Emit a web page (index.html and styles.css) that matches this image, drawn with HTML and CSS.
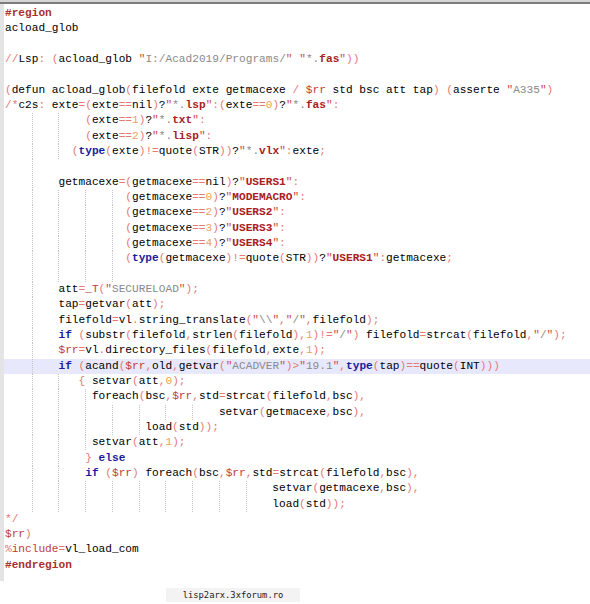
FILE: index.html
```html
<!DOCTYPE html>
<html>
<head>
<meta charset="utf-8">
<link rel="stylesheet" href="styles.css">
</head>
<body>
<div class="topstrip"></div>
<div class="editor">
  <div class="gutter"></div>
  <div class="code">
<div class="ln"><span class="p">#region</span></div>
<div class="ln">acload_glob</div>
<div class="ln"></div>
<div class="ln"><span class="o">//</span>Lsp<span class="o">:</span> <span class="o">(</span>acload_glob <span class="q">"</span><span class="s">I:/Acad2019/Programs/</span><span class="q">"</span> <span class="q">"</span><span class="s">*.</span><span class="w">fas</span><span class="q">"</span><span class="o">))</span></div>
<div class="ln"></div>
<div class="ln"><span class="o">(</span>defun acload_glob<span class="o">(</span>filefold exte getmacexe <span class="o">/</span> <span class="v">$rr</span> std bsc att tap<span class="o">)</span> <span class="o">(</span>asserte <span class="q">"</span><span class="s">A335</span><span class="q">"</span><span class="o">)</span></div>
<div class="ln"><span class="o">/*</span>c2s<span class="o">:</span> exte<span class="o">=(</span>exte<span class="o">==</span>nil<span class="o">)</span>?<span class="q">"</span><span class="s">*.</span><span class="w">lsp</span><span class="q">"</span><span class="o">:(</span>exte<span class="o">==</span><span class="n">0</span><span class="o">)</span>?<span class="q">"</span><span class="s">*.</span><span class="w">fas</span><span class="q">"</span><span class="o">:</span></div>
<div class="ln"><span class="i0"></span><span class="i"></span><span class="i"></span><span class="o">(</span>exte<span class="o">==</span><span class="n">1</span><span class="o">)</span>?<span class="q">"</span><span class="s">*.</span><span class="w">txt</span><span class="q">"</span><span class="o">:</span></div>
<div class="ln"><span class="i0"></span><span class="i"></span><span class="i"></span><span class="o">(</span>exte<span class="o">==</span><span class="n">2</span><span class="o">)</span>?<span class="q">"</span><span class="s">*.</span><span class="w">lisp</span><span class="q">"</span><span class="o">:</span></div>
<div class="ln"><span class="i0"></span><span class="i"></span><span class="i2"></span><span class="o">(</span><span class="k">type</span><span class="o">(</span>exte<span class="o">)!=</span>quote<span class="o">(</span>STR<span class="o">))</span>?<span class="q">"</span><span class="s">*.</span><span class="w">vlx</span><span class="q">"</span><span class="o">:</span>exte<span class="o">;</span></div>
<div class="ln"><span class="i0"></span><span class="i"></span></div>
<div class="ln"><span class="i0"></span><span class="i"></span>getmacexe<span class="o">=(</span>getmacexe<span class="o">==</span>nil<span class="o">)</span>?<span class="q">"</span><span class="w">USERS1</span><span class="q">"</span><span class="o">:</span></div>
<div class="ln"><span class="i0"></span><span class="i"></span><span class="i"></span><span class="i"></span><span class="i2"></span><span class="o">(</span>getmacexe<span class="o">==</span><span class="n">0</span><span class="o">)</span>?<span class="q">"</span><span class="w">MODEMACRO</span><span class="q">"</span><span class="o">:</span></div>
<div class="ln"><span class="i0"></span><span class="i"></span><span class="i"></span><span class="i"></span><span class="i2"></span><span class="o">(</span>getmacexe<span class="o">==</span><span class="n">2</span><span class="o">)</span>?<span class="q">"</span><span class="w">USERS2</span><span class="q">"</span><span class="o">:</span></div>
<div class="ln"><span class="i0"></span><span class="i"></span><span class="i"></span><span class="i"></span><span class="i2"></span><span class="o">(</span>getmacexe<span class="o">==</span><span class="n">3</span><span class="o">)</span>?<span class="q">"</span><span class="w">USERS3</span><span class="q">"</span><span class="o">:</span></div>
<div class="ln"><span class="i0"></span><span class="i"></span><span class="i"></span><span class="i"></span><span class="i2"></span><span class="o">(</span>getmacexe<span class="o">==</span><span class="n">4</span><span class="o">)</span>?<span class="q">"</span><span class="w">USERS4</span><span class="q">"</span><span class="o">:</span></div>
<div class="ln"><span class="i0"></span><span class="i"></span><span class="i"></span><span class="i"></span><span class="i2"></span><span class="o">(</span><span class="k">type</span><span class="o">(</span>getmacexe<span class="o">)!=</span>quote<span class="o">(</span>STR<span class="o">))</span>?<span class="q">"</span><span class="w">USERS1</span><span class="q">"</span><span class="o">:</span>getmacexe<span class="o">;</span></div>
<div class="ln"><span class="i0"></span><span class="i"></span><span class="i"></span><span class="i"></span><span class="i"></span></div>
<div class="ln"><span class="i0"></span><span class="i"></span>att<span class="o">=</span><span class="v">_T</span><span class="o">(</span><span class="q">"</span><span class="s">SECURELOAD</span><span class="q">"</span><span class="o">);</span></div>
<div class="ln"><span class="i0"></span><span class="i"></span>tap<span class="o">=</span>getvar<span class="o">(</span>att<span class="o">);</span></div>
<div class="ln"><span class="i0"></span><span class="i"></span>filefold<span class="o">=</span>vl<span class="o">.</span>string_translate<span class="o">(</span><span class="q">"</span><span class="s">\\</span><span class="q">"</span><span class="o">,</span><span class="q">"</span><span class="s">/</span><span class="q">"</span><span class="o">,</span>filefold<span class="o">);</span></div>
<div class="ln"><span class="i0"></span><span class="i"></span><span class="k">if</span> <span class="o">(</span>substr<span class="o">(</span>filefold<span class="o">,</span>strlen<span class="o">(</span>filefold<span class="o">),</span><span class="n">1</span><span class="o">)!=</span><span class="q">"</span><span class="s">/</span><span class="q">"</span><span class="o">)</span> filefold<span class="o">=</span>strcat<span class="o">(</span>filefold<span class="o">,</span><span class="q">"</span><span class="s">/</span><span class="q">"</span><span class="o">);</span></div>
<div class="ln"><span class="i0"></span><span class="i"></span><span class="v">$rr</span><span class="o">=</span>vl<span class="o">.</span>directory_files<span class="o">(</span>filefold<span class="o">,</span>exte<span class="o">,</span><span class="n">1</span><span class="o">);</span></div>
<div class="ln hl"><span class="i0"></span><span class="i"></span><span class="k">if</span> <span class="o">(</span>acand<span class="o">(</span><span class="v">$rr</span><span class="o">,</span>old<span class="o">,</span>getvar<span class="o">(</span><span class="q">"</span><span class="s">ACADVER</span><span class="q">"</span><span class="o">)&gt;</span><span class="q">"</span><span class="s">19.1</span><span class="q">"</span><span class="o">,</span><span class="k">type</span><span class="o">(</span>tap<span class="o">)==</span>quote<span class="o">(</span>INT<span class="o">)))</span></div>
<div class="ln"><span class="i0"></span><span class="i"></span><span class="i3"></span><span class="o">{</span> setvar<span class="o">(</span>att<span class="o">,</span><span class="n">0</span><span class="o">);</span></div>
<div class="ln"><span class="i0"></span><span class="i"></span><span class="i"></span><span class="i1"></span>foreach<span class="o">(</span>bsc<span class="o">,</span><span class="v">$rr</span><span class="o">,</span>std<span class="o">=</span>strcat<span class="o">(</span>filefold<span class="o">,</span>bsc<span class="o">),</span></div>
<div class="ln"><span class="i0"></span><span class="i"></span><span class="i"></span><span class="i"></span><span class="i"></span><span class="i"></span><span class="i"></span><span class="i"></span>setvar<span class="o">(</span>getmacexe<span class="o">,</span>bsc<span class="o">),</span></div>
<div class="ln"><span class="i0"></span><span class="i"></span><span class="i"></span><span class="i"></span><span class="i"></span><span class="i1"></span>load<span class="o">(</span>std<span class="o">));</span></div>
<div class="ln"><span class="i0"></span><span class="i"></span><span class="i"></span><span class="i1"></span>setvar<span class="o">(</span>att<span class="o">,</span><span class="n">1</span><span class="o">);</span></div>
<div class="ln"><span class="i0"></span><span class="i"></span><span class="i"></span><span class="o">}</span> <span class="k">else</span></div>
<div class="ln"><span class="i0"></span><span class="i"></span><span class="i"></span><span class="k">if</span> <span class="o">(</span><span class="v">$rr</span><span class="o">)</span> foreach<span class="o">(</span>bsc<span class="o">,</span><span class="v">$rr</span><span class="o">,</span>std<span class="o">=</span>strcat<span class="o">(</span>filefold<span class="o">,</span>bsc<span class="o">),</span></div>
<div class="ln"><span class="i0"></span><span class="i"></span><span class="i"></span><span class="i"></span><span class="i"></span><span class="i"></span><span class="i"></span><span class="i"></span><span class="i"></span><span class="i"></span>setvar<span class="o">(</span>getmacexe<span class="o">,</span>bsc<span class="o">),</span></div>
<div class="ln"><span class="i0"></span><span class="i"></span><span class="i"></span><span class="i"></span><span class="i"></span><span class="i"></span><span class="i"></span><span class="i"></span><span class="i"></span><span class="i"></span>load<span class="o">(</span>std<span class="o">));</span></div>
<div class="ln"><span class="o">*/</span></div>
<div class="ln"><span class="v">$rr</span><span class="o">)</span></div>
<div class="ln"><span class="o">%</span><span class="v">include</span><span class="o">=</span>vl_load_com</div>
<div class="ln"><span class="p">#endregion</span></div>
  </div>
</div>
<div class="footer"><span class="mark">lisp2arx.3xforum.ro</span></div>
</body>
</html>
```

FILE: styles.css
```css
html, body {
  margin: 0;
  padding: 0;
  background: #ffffff;
}
.topstrip {
  height: 2px;
  background: #d6d6d6;
}
.editor {
  display: flex;
  border-top: 2px solid #7c7c7c;
  height: 579px;
  box-sizing: border-box;
}
.gutter {
  width: 4px;
  background: #e4e4e4;
  flex: none;
}
.code {
  flex: 1;
  padding-top: 2px;
  font-family: "Liberation Mono", "Courier New", monospace;
  font-size: 11.15px;
  color: #000000;
}
.ln {
  height: 15.33px;
  line-height: 15.33px;
  white-space: pre;
  padding-left: 1px;
}
.hl {
  background: #e8e8fc;
}
.i0, .i, .i1, .i2, .i3 {
  display: inline-block;
  height: 15.33px;
  vertical-align: top;
}
.i0, .i { width: 4ch; }
.i1 { width: 1ch; }
.i2 { width: 2ch; }
.i3 { width: 3ch; }
.i, .i1, .i2, .i3 {
  background-image: repeating-linear-gradient(to bottom, #c4c4c4 0 1px, transparent 1px 2px);
  background-size: 1px 100%;
  background-repeat: no-repeat;
  background-position: 0 0;
}
.o { color: #e67878; }
.q { color: #d04848; }
.s { color: #8a8a8a; }
.w { color: #a82020; font-weight: bold; }
.k { color: #1c1c9a; font-weight: bold; }
.n { color: #eda15a; }
.v { color: #c03a3a; }
.p { color: #a83030; font-weight: bold; }
.footer {
  height: 21px;
  display: flex;
  align-items: flex-end;
}
.mark {
  margin-left: 166px;
  width: 134px;
  height: 14px;
  line-height: 14px;
  background: #f3f3f3;
  text-align: center;
  font-family: "DejaVu Sans Mono", monospace;
  font-size: 8.8px;
  color: #1a1a1a;
}
```
